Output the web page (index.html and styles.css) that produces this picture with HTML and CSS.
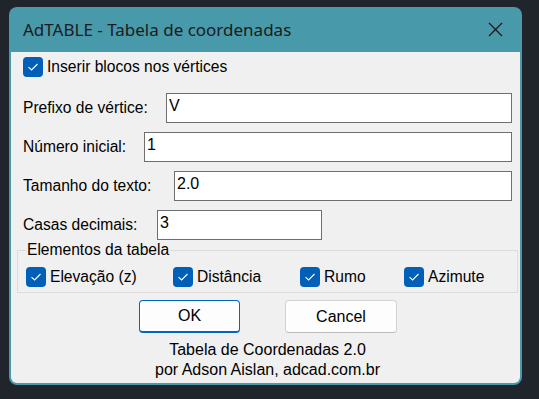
FILE: index.html
```html
<!DOCTYPE html>
<html lang="pt-BR">
<head>
    <meta charset="UTF-8">
    <meta name="viewport" content="width=device-width, initial-scale=1.0">
    <title>AdTABLE - Tabela de coordenadas</title>
    <link rel="stylesheet" href="styles.css">
</head>
<body>
    <div class="window">
        <div class="titlebar">
            <span class="title">AdTABLE - Tabela de coordenadas</span>
            <svg class="close" width="15" height="15" viewBox="0 0 15 15">
                <path d="M1 1 L14 14 M14 1 L1 14" stroke="#1a1a1a" stroke-width="1.3" fill="none"/>
            </svg>
        </div>

        <div class="content">
            <label class="check top-check">
                <span class="box"><svg width="20" height="20" viewBox="0 0 20 20"><path d="M5.5 10.2 L8.6 13 L14.5 7" stroke="#fff" stroke-width="1.1" fill="none"/></svg></span>
                Inserir blocos nos vértices
            </label>

            <div class="field">
                <label>Prefixo de vértice:</label>
                <input type="text" class="input input-prefix" value="V">
            </div>

            <div class="field">
                <label>Número inicial:</label>
                <input type="text" class="input input-num" value="1">
            </div>

            <div class="field">
                <label>Tamanho do texto:</label>
                <input type="text" class="input input-size" value="2.0">
            </div>

            <div class="field">
                <label>Casas decimais:</label>
                <input type="text" class="input input-dec" value="3">
            </div>

            <fieldset class="group">
                <legend>Elementos da tabela</legend>
                <div class="group-row">
                    <label class="check">
                        <span class="box"><svg width="20" height="20" viewBox="0 0 20 20"><path d="M5.5 10.2 L8.6 13 L14.5 7" stroke="#fff" stroke-width="1.1" fill="none"/></svg></span>
                        Elevação (z)
                    </label>
                    <label class="check">
                        <span class="box"><svg width="20" height="20" viewBox="0 0 20 20"><path d="M5.5 10.2 L8.6 13 L14.5 7" stroke="#fff" stroke-width="1.1" fill="none"/></svg></span>
                        Distância
                    </label>
                    <label class="check">
                        <span class="box"><svg width="20" height="20" viewBox="0 0 20 20"><path d="M5.5 10.2 L8.6 13 L14.5 7" stroke="#fff" stroke-width="1.1" fill="none"/></svg></span>
                        Rumo
                    </label>
                    <label class="check">
                        <span class="box"><svg width="20" height="20" viewBox="0 0 20 20"><path d="M5.5 10.2 L8.6 13 L14.5 7" stroke="#fff" stroke-width="1.1" fill="none"/></svg></span>
                        Azimute
                    </label>
                </div>
            </fieldset>

            <div class="buttons">
                <button class="btn btn-ok">OK</button>
                <button class="btn btn-cancel">Cancel</button>
            </div>

            <div class="footer">
                Tabela de Coordenadas 2.0<br>
                por Adson Aislan, adcad.com.br
            </div>
        </div>
    </div>
</body>
</html>
```

FILE: styles.css
```css
body {
    margin: 0;
    padding: 7px 0 0 9px;
    background-color: #20252c;
    font-family: "Liberation Sans", Arial, sans-serif;
    font-size: 15.6px;
    color: #000;
}
.window {
    width: 513px;
    height: 378px;
    box-sizing: border-box;
    background: #4899aa;
    border-radius: 8px;
    padding: 0 2px 2px 2px;
    display: flex;
    flex-direction: column;
}
.titlebar {
    height: 45px;
    flex-shrink: 0;
    display: flex;
    align-items: center;
    justify-content: space-between;
    padding: 0 17px 0 12px;
}
.title {
    font-family: "Noto Sans", sans-serif;
    font-size: 17px;
    color: #1b1b1b;
    margin-top: -1px;
}
.close {
    display: block;
}
.content {
    flex: 1;
    background: #f0f0f0;
    border-radius: 0 0 6px 6px;
    padding: 5px 8px 0 12px;
    display: flex;
    flex-direction: column;
}
.check {
    display: flex;
    align-items: center;
    gap: 4px;
    height: 20px;
    white-space: nowrap;
}
.box {
    width: 20px;
    height: 20px;
    border-radius: 4px;
    background: #005fb8;
    display: block;
    flex-shrink: 0;
}
.box svg {
    display: block;
}
.top-check {
    margin-bottom: 16px;
}
.field {
    display: flex;
    align-items: center;
    height: 30px;
    margin-bottom: 9px;
}
.field label {
    white-space: nowrap;
}
.input {
    height: 30px;
    box-sizing: border-box;
    border: 1px solid #6e6e6e;
    background: #fff;
    font-family: "Liberation Sans", Arial, sans-serif;
    font-size: 16px;
    padding: 0 0 4px 2px;
    margin: 0;
    outline: none;
}
.input-prefix {
    margin-left: auto;
    width: 346px;
}
.input-num {
    margin-left: auto;
    width: 368px;
}
.input-size {
    margin-left: auto;
    width: 338px;
}
.input-dec {
    margin-left: auto;
    margin-right: 190px;
    width: 165px;
}
.group {
    margin: -8px -6px 0 -6px;
    padding: 8px 0 5px 8px;
    border: 1px solid #dcdcdc;
    min-width: 0;
}
.group legend {
    padding: 0 1px;
    margin-left: 0;
    line-height: 18px;
}
.group-row {
    display: grid;
    grid-template-columns: 147px 127px 104px 1fr;
}
.buttons {
    display: flex;
    justify-content: center;
    gap: 45px;
    margin-top: 7px;
    padding-left: 1px;
}
.btn {
    height: 33px;
    font-family: "Liberation Sans", Arial, sans-serif;
    font-size: 16px;
    background: #fdfdfd;
    border-radius: 4px;
    color: #000;
}
.btn-ok {
    width: 101px;
    border: 1px solid #0067c0;
    border-bottom-width: 2px;
}
.btn-cancel {
    width: 112px;
    border: 1px solid #d2d2d2;
    border-bottom-color: #bcbcbc;
}
.footer {
    text-align: center;
    font-size: 16px;
    line-height: 20px;
    margin-top: 7px;
}
```
